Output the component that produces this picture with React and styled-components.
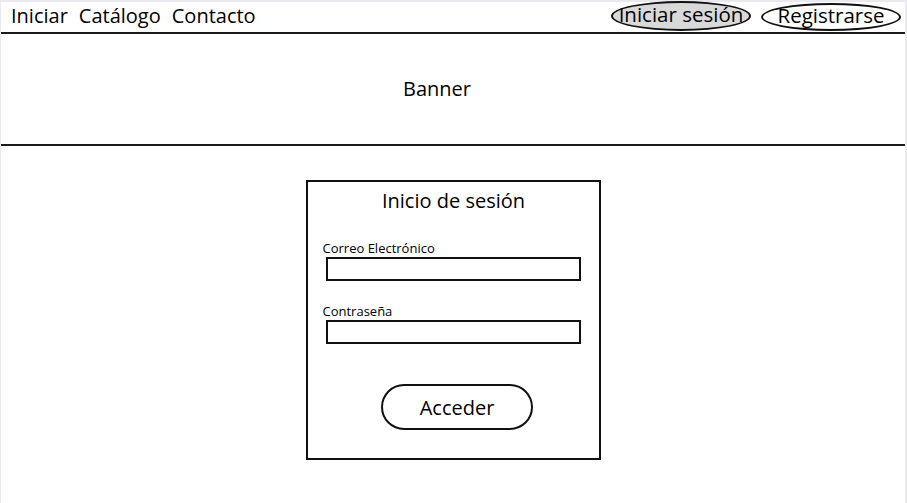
import React from 'react';
import styled, { createGlobalStyle } from 'styled-components';

const GlobalStyle = createGlobalStyle`
  html, body {
    margin: 0;
    padding: 0;
    background: #ffffff;
  }
  body {
    font-family: "Open Sans", "Noto Sans", sans-serif;
    color: #000;
  }
`;

const Page = styled.div`
  box-sizing: border-box;
  width: 907px;
  height: 503px;
  border-top: 2px solid #e9e9ee;
  border-left: 1px solid #e9e9ee;
  border-right: 2px solid #e9e9ee;
  display: flex;
  flex-direction: column;
`;

const NavBar = styled.nav`
  height: 30px;
  display: flex;
  align-items: center;
  justify-content: space-between;
  padding: 0 4px 0 10px;
  border-bottom: 2px solid #1a1a1a;
`;

const NavLinks = styled.div`
  display: flex;
  gap: 11px;
  margin-top: -4px;
`;

const NavLink = styled.a`
  font-size: 20px;
  color: #000;
  text-decoration: none;
  cursor: pointer;
`;

const AuthGroup = styled.div`
  display: flex;
  align-items: center;
  gap: 10px;
`;

const Pill = styled.button`
  box-sizing: border-box;
  width: 140px;
  height: ${p => p.$tall ? 30 : 28}px;
  border: 2px solid #111;
  border-radius: 50%;
  background: ${p => p.$active ? '#d9d9d9' : '#ffffff'};
  font-family: inherit;
  font-size: 20.5px;
  line-height: 1;
  color: #000;
  padding: 0 0 3px;
  display: flex;
  align-items: center;
  justify-content: center;
  margin-top: ${p => p.$tall ? -2 : 0}px;
`;

const Banner = styled.header`
  height: 112px;
  display: flex;
  align-items: center;
  justify-content: center;
  border-bottom: 2px solid #1a1a1a;
  font-size: 20px;
  padding: 0 32px 2px 0;
  box-sizing: border-box;
`;

const Main = styled.main`
  display: flex;
  justify-content: center;
  padding-top: 34px;
`;

const LoginCard = styled.form`
  box-sizing: border-box;
  width: 295px;
  height: 280px;
  border: 2px solid #111;
  display: flex;
  flex-direction: column;
  padding: 4px 18px 0 15px;
`;

const Title = styled.h2`
  margin: 0;
  padding: 1px 0 0 4px;
  font-weight: 400;
  font-size: 20px;
  line-height: 28px;
  text-align: center;
`;

const Label = styled.label`
  font-size: 13px;
  line-height: 17px;
  margin-top: ${p => p.$top}px;
`;

const Field = styled.input`
  box-sizing: border-box;
  height: 24px;
  margin-left: 3px;
  border: 2px solid #111;
  background: #fff;
  outline: none;
`;

const Submit = styled.button`
  box-sizing: border-box;
  align-self: center;
  width: 152px;
  height: 46px;
  margin-top: 40px;
  margin-left: 11px;
  border: 2px solid #111;
  border-radius: 23px;
  background: #fff;
  font-family: inherit;
  font-size: 20px;
  color: #000;
  padding: 0;
`;

export default function App() {
  return (
    <>
      <GlobalStyle />
      <Page>
        <NavBar>
          <NavLinks>
            <NavLink>Iniciar</NavLink>
            <NavLink>Catálogo</NavLink>
            <NavLink>Contacto</NavLink>
          </NavLinks>
          <AuthGroup>
            <Pill type="button" $active $tall>Iniciar sesión</Pill>
            <Pill type="button">Registrarse</Pill>
          </AuthGroup>
        </NavBar>
        <Banner>Banner</Banner>
        <Main>
          <LoginCard onSubmit={e => e.preventDefault()}>
            <Title>Inicio de sesión</Title>
            <Label $top={25}>Correo Electrónico</Label>
            <Field type="email" />
            <Label $top={22}>Contraseña</Label>
            <Field type="password" />
            <Submit type="submit">Acceder</Submit>
          </LoginCard>
        </Main>
      </Page>
    </>
  );
}
